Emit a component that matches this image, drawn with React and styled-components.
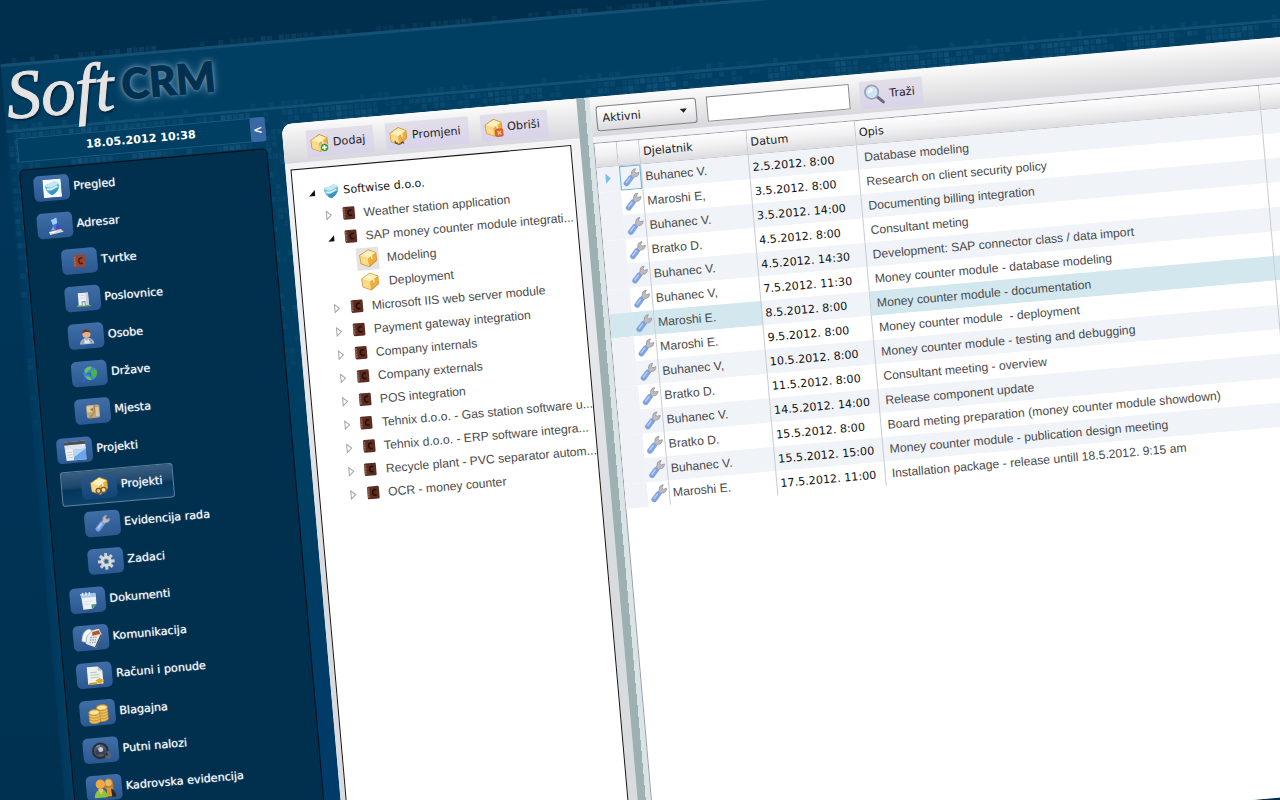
import React from "react";
import styled, { createGlobalStyle, css } from "styled-components";

const GlobalStyle = createGlobalStyle`
    * {
        box-sizing: border-box;
    }

    body {
        margin: 0;
        background: #002f4c;
        font-family: "DejaVu Sans", Verdana, sans-serif;
        font-size: 11px;
    }

    button, input, select {
        font: inherit;
        color: inherit;
    }
`

const Stage = styled.div`
    height: 100vh;
    overflow: hidden;
    background: linear-gradient(175deg, #002f4d 0%, #002f4d 8%, #00365a 20%, #00304e 100%);
`

/* the whole desktop is tilted on the page */
const Scene = styled.div`
    display: flex;
    flex-direction: column;
    width: 100vw;
    min-height: 112vh;
    margin-left: -5px;
    padding-bottom: 5px;
    transform-origin: 5px 0;
    transform: rotate(-5deg) scale(1.017);
`

const TopBand = styled.div`
    display: flex;
    align-items: flex-end;
    height: 63px;
    margin-left: -20px;
    background: #002f4d;
`

const Header = styled.header`
    position: relative;
    display: flex;
    align-items: flex-start;
    gap: 8px;
    height: 68px;
    padding-left: 3px;
    background: #003e62;
    border-top: 3px solid #144f74;
    border-bottom: 3px solid #144f74;
`

const Soft = styled.span`
    position: relative;
    font-family: "Liberation Serif", serif;
    font-style: italic;
    font-size: 68px;
    line-height: 56px;
    color: #e6e3e3;
    -webkit-text-stroke: 1px #e6e3e3;
    text-shadow: 1px 2px 2px #001c30;
`

const Crm = styled.span`
    position: relative;
    font-family: Lato, sans-serif;
    font-weight: 900;
    font-size: 41px;
    line-height: 54px;
    color: #00304f;
    -webkit-text-stroke: 1px #00304f;
    text-shadow: 0 0 3px #86a6ba, 0 0 6px #6b93ad, 0 0 10px #3f7496;
`

const Dots = styled.svg`
    display: block;
    flex: none;
`

const HeaderDots = styled(Dots)`
    position: absolute;
    left: 0;
    bottom: 0;
`

const Backdrop = styled(Dots)`
    position: absolute;
    left: 0;
    top: 0;
`

const Main = styled.div`
    position: relative;
    display: flex;
    flex: 1;
    align-items: stretch;
    gap: 16px;
    padding-left: 9px;
    background:
        linear-gradient(to right, #00385c, #003e62 9px, transparent 9px),
        linear-gradient(#003e62 0%, #003e62 50%, #003a6c 100%);
`

const Aside = styled.aside`
    position: relative;
    display: flex;
    flex-direction: column;
    flex: none;
    gap: 7px;
    width: 245px;
    padding-top: 6px;
`

const Clock = styled.div`
    display: flex;
    align-items: stretch;
    height: 24px;
    background: #003e62;
    border: 1px solid #1c5a82;
    color: #fff;
`

const Stamp = styled.time`
    flex: 1;
    padding-left: 12px;
    line-height: 22px;
    font-weight: bold;
    text-align: center;
`

const Collapse = styled.button`
    width: 15px;
    margin: -1px;
    padding: 0;
    border: 0;
    border-radius: 3px;
    background: #3a68a4;
    font-weight: bold;
`

const Nav = styled.nav`
    display: flex;
    flex-direction: column;
    flex: 1;
    padding: 1px 0 0 12px;
    background: #00304d;
    border: 1px solid #000f1c;
    border-radius: 5px 5px 0 0;
`

const NavRow = styled.div`
    display: flex;
    align-items: center;
    height: 37px;
    padding-left: ${props => (props.$child && !props.$active ? 21 : 0)}px;
`

const NavLink = styled.a`
    display: flex;
    align-items: center;
    gap: 4px;
    color: #f4f7fa;
    text-decoration: none;
    text-shadow: 0 0 1px #c8d4e0;
    white-space: nowrap;

    ${props => props.$active && css`
        height: 34px;
        margin-left: 1px;
        padding: 0 10px 0 19px;
        border: 1px solid #5d819f;
        border-radius: 3px;
        background: linear-gradient(#3a5f80 0%, #1c466a 46%, #04365a 54%, #0b4068 100%);
    `}
`

const NavText = styled.span`
    padding-bottom: 1px;
`

const Tile = styled.span`
    display: flex;
    align-items: center;
    justify-content: center;
    width: 35px;
    height: 25px;
    border-radius: 5px;
    background: ${props => (props.$active
        ? 'linear-gradient(#2c5784, #114578)'
        : 'linear-gradient(#3f6ea8, #2b5890)')};
`

const Workspace = styled.main`
    position: relative;
    display: flex;
    flex: 1;
    min-width: 0;
    margin-top: 15px;
    border-radius: 10px 0 0 0;
    background: #f3f3f7;
    overflow: hidden;
`

const TreePane = styled.section`
    display: flex;
    flex-direction: column;
    flex: none;
    width: 291px;
    background: linear-gradient(#f6f6f9, #d9dcdf 60%);
`

const ListPane = styled.section`
    display: flex;
    flex-direction: column;
    flex: 1;
    min-width: 0;
`

const Splitter = styled.div`
    flex: none;
    width: 13px;
    background: linear-gradient(to right, #9db0b2 0 8px, #d9e4e7 8px 100%);
`

const Toolbar = styled.div`
    display: flex;
    align-items: center;
    gap: ${props => props.$gap}px;
    height: 39px;
    margin-bottom: 6px;
    padding: 5px 0 2px ${props => props.$start}px;
    background: linear-gradient(#fbfbfb, #eaeaeb 45%, #d8d7dc);
`

const ToolButton = styled.button`
    display: flex;
    align-items: center;
    gap: 4px;
    height: 27px;
    padding: 0 8px 0 3px;
    border: 0;
    background: linear-gradient(#e2dfe9, #d9d3ea);
    color: #1c1c24;
`

const TreeBox = styled.ul`
    flex: 1;
    margin: 0 9px 0 5px;
    padding: 12px 0 0;
    border: 1px solid #1e1412;
    background: #fff;
    list-style: none;
`

const TreeRow = styled.li`
    display: flex;
    align-items: center;
    height: 23px;
    padding-left: ${props => 13 + props.$level * 15}px;
    font-family: ${props => (props.$level ? '"Liberation Sans", Arial' : '"DejaVu Sans", Verdana')}, sans-serif;
    font-size: ${props => (props.$level ? 12 : 11)}px;
    color: ${props => (props.$level ? '#4a4a4a' : '#111')};
    white-space: nowrap;
`

const Toggle = styled.button`
    display: flex;
    align-items: center;
    justify-content: center;
    width: 10px;
    height: 16px;
    padding: 0;
    border: 0;
    background: none;
`

const Blank = styled.span`
    width: 10px;
`

const TreeIcon = styled.span`
    display: flex;
    align-items: center;
    justify-content: center;
    width: 22px;
    height: 22px;
    margin: 0 ${props => [1, 4, 8][props.$level]}px 0 3px;
    background: ${props => (props.$marked ? '#e4e3e4' : 'none')};
`

const SelectWrap = styled.div`
    position: relative;
    display: flex;
`

const Select = styled.select`
    width: 99px;
    height: 25px;
    padding: 0 5px;
    appearance: none;
    border: 1px solid #7c8086;
    border-radius: 3px;
    background: linear-gradient(#fff, #f1f1f2 50%, #dadade);
    color: #1c1c1c;
`

const Caret = styled.svg`
    position: absolute;
    right: 9px;
    top: 9px;
    pointer-events: none;
`

const Search = styled.input`
    width: 141px;
    height: 25px;
    padding: 0 5px;
    border: 1px solid #85888d;
    background: #fff;
`

const GridBox = styled.div`
    flex: 1;
    border: 1px solid #9a9ea4;
    border-right: 0;
    border-bottom: 0;
    background: #fff;
`

const Table = styled.table`
    width: 100%;
    table-layout: fixed;
    border-collapse: separate;
    border-spacing: 0;
`

const Th = styled.th`
    height: 24px;
    padding: 0 3px;
    border-right: 1px solid #c2c4ca;
    border-bottom: 1px solid #c6c8ce;
    background: linear-gradient(#fdfdfd, #f1f1f3 50%, #dcdce0);
    color: #1c1c1c;
    font-weight: normal;
    text-align: left;
`

const Tr = styled.tr`
    background: ${props => (props.$striped ? '#f0f3f8' : '#fff')};
`

const Td = styled.td`
    height: 24px;
    padding: 0 ${props => props.$pad || 3}px 1px;
    border-right: 1px solid ${props => (props.$bare ? 'transparent' : '#c9ccd2')};
    background-color: ${props => (props.$picked ? '#d2e7ee' : 'transparent')};
    font-family: "Liberation Sans", Arial, sans-serif;
    font-size: 12px;
    color: #4a4a4a;
    white-space: pre;
`

const Gutter = styled(Td)`
    padding: 0;
    background-color: ${props => (props.$picked ? '#d2e7ee' : '#f0f2f8')};
    text-align: center;
`

const IconCell = styled(Td)`
    padding: 0;
`

const IconFrame = styled.span`
    display: flex;
    align-items: center;
    justify-content: center;
    width: 21px;
    height: 24px;
    border: 1px solid ${props => (props.$focus ? '#6db5cf' : 'transparent')};
`

const DateCell = styled(Td)`
    padding-bottom: 0;
    font-family: "DejaVu Sans", Verdana, sans-serif;
    font-size: 11px;
    color: #111;
`

/* ---- icons ---- */

const Icon = ({ size = 18, children }) => (
    <svg width={size} height={size} viewBox="0 0 18 18" aria-hidden="true">{children}</svg>
)

const Cube = () => (
    <g strokeLinejoin="round">
        <path d="M9.6 1.4 16.2 4.6 16.4 11.4 9.4 16.6 2.2 13.4 1.6 6Z" fill="#f0b848" stroke="#cf9330" strokeWidth="1.4" />
        <path d="M9.6 1.4 16.2 4.6 8.8 9.2 1.6 6Z" fill="#fdeeb4" />
        <path d="M1.6 6 8.8 9.2 9.4 16.6 2.2 13.4Z" fill="#f9d886" />
        <path d="M8.8 9.2 16.2 4.6 16.4 11.4 9.4 16.6Z" fill="#ebae44" />
        <path d="M5.4 3.8 12.2 7 12.6 10" fill="none" stroke="#fff4cc" strokeWidth="1.2" />
        <path d="M4 9.4l3 1.4v2.6l-3-1.4Z" fill="#fbe29c" />
    </g>
)

const BoxIcon = ({ size }) => <Icon size={size}><Cube /></Icon>

const BoxAddIcon = () => (
    <Icon size={19}>
        <Cube />
        <circle cx="13.5" cy="13.5" r="4" fill="#3f9a35" stroke="#e2f2dc" strokeWidth=".7" />
        <path d="M13.5 11.2v4.6M11.2 13.5h4.6" stroke="#fff" strokeWidth="1.5" />
    </Icon>
)

const BoxEditIcon = () => (
    <Icon size={19}>
        <Cube />
        <path d="M6 15c2 2 5 2 6.5 0M5.5 13l.5 2.5 2-.5M13.5 16.5l-.7-2-2 .8" fill="none" stroke="#6d5220" strokeWidth="1" />
    </Icon>
)

const BoxRemoveIcon = () => (
    <Icon size={19}>
        <Cube />
        <rect x="10.5" y="10.5" width="7" height="7" rx="1.5" fill="#e8642a" stroke="#c84a18" strokeWidth=".6" />
        <path d="M12.4 12.4l3.2 3.2M15.6 12.4l-3.2 3.2" stroke="#ffcdb0" strokeWidth="1.2" />
    </Icon>
)

const BoxLinkIcon = () => (
    <Icon size={19}>
        <Cube />
        <circle cx="8" cy="13.5" r="2.3" fill="#e9c98a" stroke="#6a5326" strokeWidth="1.1" />
        <circle cx="12.8" cy="13" r="2.3" fill="#f4dca8" stroke="#7c6230" strokeWidth="1.1" />
    </Icon>
)

const BookIcon = ({ size, cover = '#5c2c20', ink = '#240c08' }) => (
    <Icon size={size}>
        <rect x="2" y="1.5" width="14" height="15" rx="1.5" fill={cover} />
        <path d="M2 3h3v12H2Z" fill="#a06a54" fillOpacity=".4" />
        <path d="M12.6 6c-2.4-1.2-4.4.4-4.4 3s2.2 4 4.4 2.6" fill="none" stroke={ink} strokeWidth="1.8" />
        <path d="M2.5 4.5h1.5M2.5 7.5h1.5M2.5 10.5h1.5M2.5 13.5h1.5" stroke="#c8a494" strokeWidth=".6" />
    </Icon>
)

const GlobeIcon = ({ framed }) => (
    <Icon>
        {framed && <rect x="0" y="0" width="18" height="18" fill="#f4fbff" />}
        <path d="M2 6C4 3.5 7 5 9 3.5 12 1.5 14 2.5 16 5 17 9 13 14 8.5 15.5 5 15 2 10 2 6Z" fill="#6bbfe4" />
        <path d="M2 6C4 3.5 7 5 9 3.5 12 1.5 14 2.5 16 5 13 5 11 8 8 8 5 8 4 7 2 6Z" fill="#c4e8f7" />
        <path d="M5 11.5C8 12.5 11 9 15.5 9 13.5 12.5 11 15 8.5 15.5 7 15 6 14 5 11.5Z" fill="#3b93c4" />
        <path d="M4 9c3 2 6 .5 10-2" fill="none" stroke="#e6f7ff" strokeWidth="1.4" />
    </Icon>
)

const WrenchIcon = ({ size }) => (
    <Icon size={size}>
        <path d="M8 7.8 9.8 5.6C9.4 2.8 11.4.6 14.2.8L12.6 3.4 14 5.2 17 4.4C17 7.2 14.8 9.2 12.2 8.6L10.4 10.4Z" fill="#bebcc0" stroke="#96949a" strokeWidth=".8" />
        <path d="M1.8 13.2 7.2 7.2c1.4-.8 4.4 1.8 3.4 3.4L5.6 16.4C3.6 18 .2 15.2 1.8 13.2Z" fill="#7fa2e2" stroke="#7694d0" strokeWidth=".5" />
        <path d="M3.6 13.8 8.2 8.8" stroke="#b4ccf6" strokeWidth="1.6" />
    </Icon>
)

const GearIcon = () => (
    <Icon>
        <g stroke="#cfd2d4" strokeWidth="3">
            <path d="M9 .8v16.400M.8 9h16.400M3.2 3.2l11.6 11.6M14.8 3.2 3.2 14.8" />
        </g>
        <circle cx="9" cy="9" r="5.4" fill="#d9dcde" />
        <circle cx="9" cy="9" r="2.3" fill="#3c5f88" stroke="#8b98a5" strokeWidth="1" />
    </Icon>
)

const PenIcon = () => (
    <Icon>
        <path d="M2 14.5 14 12.5 16.5 15.5 3 17.5Z" fill="#d9d6d0" />
        <path d="M4 13.5 8 7l5 6Z" fill="#93a6cc" />
        <path d="M5 3 10.5 .8 14.5 11.5 8 13Z" fill="#3a72e2" />
        <path d="M5 3 10.5 .8 11 6.5 6.5 8Z" fill="#9ed0fa" />
        <path d="M11 5 14.5 11.5 9 13Z" fill="#4a45ae" />
        <path d="M3 15.5 9 14.6" stroke="#fff" strokeWidth="1" />
    </Icon>
)

const BuildingIcon = () => (
    <Icon>
        <path d="M1.5 16.5h15l-3-2.5H4Z" fill="#6aa860" />
        <path d="M4 3h10v12H4Z" fill="#eef1f3" />
        <path d="M11.5 3H14v12h-2.5Z" fill="#c9d0d6" />
        <path d="M5.5 5.5h5M5.5 8h5" stroke="#ccd4da" strokeWidth=".8" />
        <path d="M7 11h4v4.5H7Z" fill="#8a9eae" />
        <path d="M8 12.5h2v3H8Z" fill="#e7ecef" />
    </Icon>
)

const PersonIcon = () => (
    <Icon>
        <path d="M2 16.5c0-4 3-6 7-6s7 2 7 6Z" fill="#9fb6d6" />
        <path d="M6.5 10.5 9 13.5l2.5-3v5.5h-5Z" fill="#dde6f0" />
        <circle cx="9" cy="6.5" r="4" fill="#e5b08a" />
        <path d="M4.8 6c0-5 8.4-5 8.4 0-2-1.8-6-1.8-8.4 0Z" fill="#6a3a26" />
        <path d="M11 12l3 3M4 15l2-2.5" stroke="#c98468" strokeWidth="1.2" />
    </Icon>
)

const WorldIcon = () => (
    <Icon>
        <circle cx="9.5" cy="8.5" r="6.8" fill="#3a8ad6" />
        <path d="M4 5c2-3 5-3.6 7-3.2l-1 3-3 1-1.500 3.2Z" fill="#6cc84a" />
        <path d="M10 6l5.5-1c1.5 4 0 6-2 8l-3-2Z" fill="#4fb43c" />
        <path d="M5 11l4 1 1 3.2c-3 0-5-2-5-4.2Z" fill="#6cc84a" />
        <path d="M6 8.5h3.5v3" fill="none" stroke="#2a66b0" strokeWidth="1.4" />
        <path d="M1 16.5l4-3.5" stroke="#2c66c8" strokeWidth="1.8" />
    </Icon>
)

const MapIcon = () => (
    <Icon>
        <rect x="2.5" y="2.5" width="13" height="13" rx="2" fill="#c4a374" />
        <path d="M3 3.5h6v6H3Z" fill="#e0cba4" />
        <path d="M10.5 3v6l-5 6" fill="none" stroke="#a88658" strokeWidth="1.2" />
        <path d="M11.5 5h3v9h-3Z" fill="#d8c8b0" />
        <path d="M6 7l3-2v4Z" fill="#9c7848" />
    </Icon>
)

const WindowIcon = () => (
    <Icon size={22}>
        <path d="M.5 1.5h17v15H1.5Z" fill="#eef1f5" />
        <path d="M.5 1.5h17v2.6H.5Z" fill="#4a5058" />
        <path d="M1 4.6h16.5v3H1Z" fill="#dfe5ee" />
        <path d="M7.5 8h10v8.5h-10Z" fill="#6ba6ea" />
        <path d="M7.5 8h10l-10 6Z" fill="#b9d6fa" />
        <path d="M2.5 10h4M2.5 12h4M2.5 14h4" stroke="#c4cbd4" strokeWidth=".8" />
    </Icon>
)

const NoteIcon = () => (
    <Icon size={20}>
        <path d="M3 4h13v8.5l-4 4H4Z" fill="#eef1f4" />
        <path d="M2 2.5h14v3.5H3Z" fill="#a4c6ee" />
        <path d="M4.5 1.5v3M7.5 1.5v3M10.5 1.5v3" stroke="#e6eef8" strokeWidth="1.3" />
        <path d="M16 12.5h-4.5v4Z" fill="#3f9a6c" />
        <path d="M5.5 9.5h7M5.5 12h5" stroke="#dbe0e5" strokeWidth=".8" />
    </Icon>
)

const PhoneIcon = () => (
    <Icon size={22}>
        <path d="M6 3.5 15.5 2l2 5-5.5 10-8-4Z" fill="#e9ecef" />
        <path d="M1 11C1.5 5 4 2 8 1.5l2 2C6 5 4.5 8 4.5 12Z" fill="#f6f8fa" stroke="#9aa6b4" strokeWidth=".5" />
        <path d="M10 4l5.5-.8.8 3-6.5.8Z" fill="#b4552c" />
        <path d="M8 8.5h5M7.5 10.5h5M7 12.5h5" stroke="#9aa4ae" strokeWidth="1.2" strokeDasharray="1.2 .8" />
        <path d="M17.5 7 12 17l-1-.6L16.5 6.5Z" fill="#3c4450" />
    </Icon>
)

const InvoiceIcon = () => (
    <Icon size={20}>
        <path d="M2.5 1h9.5l4 4v11.5H2.5Z" fill="#eef2ee" />
        <path d="M12 1v4h4Z" fill="#b9c6cc" />
        <path d="M5 6h6M5 8.3h8M5 10.6h8" stroke="#b9c6be" strokeWidth=".9" />
        <path d="M9 13.5l4-2.2 4 2.2-4 3.5Z" fill="#dfae2e" />
        <path d="M3.5 15h7v1.8h-7Z" fill="#c9942a" />
    </Icon>
)

const Coins = ({ x, y, n }) => (
    <g>
        {Array.from({ length: n }, (_, k) => (
            <ellipse key={k} cx={x} cy={y - k * 2.2} rx="4.6" ry="2.4" fill="#eec060" stroke="#b98428" strokeWidth=".6" />
        ))}
        <ellipse cx={x} cy={y - (n - 1) * 2.2} rx="3.4" ry="1.4" fill="#fbe6a4" />
    </g>
)

const CoinsIcon = () => (
    <Icon size={22}>
        <Coins x={12.4} y={13.6} n={5} />
        <Coins x={6} y={14.8} n={4} />
    </Icon>
)

const WheelIcon = () => (
    <Icon size={20}>
        <circle cx="8" cy="9" r="6.5" fill="#4d5a70" stroke="#2c2c36" strokeWidth="1.8" />
        <path d="M3 9c2-2 8-2 10 0l-1.5 4C9.5 11.5 6.5 11.5 4.5 13Z" fill="#3a4252" />
        <circle cx="8.5" cy="8" r="2.2" fill="#c3cbd8" />
        <path d="M5 5.5l3-1.5" stroke="#8896ac" strokeWidth="1.4" />
        <path d="M14 10l3 5M12 14l4 2.5" stroke="#6a6468" strokeWidth="1.7" />
    </Icon>
)

const PeopleIcon = () => (
    <Icon size={22}>
        <path d="M8.8 9C8.5 3 10 1.5 12.4 1.5S16.5 3 16 10l-3 1Z" fill="#c08030" />
        <circle cx="12.4" cy="5" r="2.6" fill="#eab868" />
        <path d="M9 16.5c0-8 8-9 9 0Z" fill="#2c2a28" />
        <path d="M10.5 9h3.5l.5 7h-4Z" fill="#e09a2c" />
        <circle cx="5.8" cy="5.6" r="3.8" fill="#f0a840" />
        <path d="M.5 16.5c0-9 10.5-9 10.5 0Z" fill="#8cc63e" />
        <path d="M3.6 9.5h4.4L5.8 14Z" fill="#f6c270" />
    </Icon>
)

const MagnifierIcon = () => (
    <Icon size={22}>
        <path d="M11 11l5 5" stroke="#6a6e78" strokeWidth="2.4" strokeLinecap="round" />
        <circle cx="7.3" cy="7.3" r="5.4" fill="#cbe4f8" stroke="#98a2b4" strokeWidth="1.3" />
        <path d="M4 8c0-2.4 1.6-4 4-4 1.2 2-1 4-4 4Z" fill="#f6fbff" />
    </Icon>
)

/* ---- data ---- */

const menu = [
    { text: 'Pregled', icon: <GlobeIcon framed /> },
    { text: 'Adresar', icon: <PenIcon /> },
    { text: 'Tvrtke', icon: <BookIcon size={15} cover="#944634" ink="#4c1a10" />, child: true },
    { text: 'Poslovnice', icon: <BuildingIcon />, child: true },
    { text: 'Osobe', icon: <PersonIcon />, child: true },
    { text: 'Države', icon: <WorldIcon />, child: true },
    { text: 'Mjesta', icon: <MapIcon />, child: true },
    { text: 'Projekti', icon: <WindowIcon /> },
    { text: 'Projekti', icon: <BoxLinkIcon />, child: true, active: true },
    { text: 'Evidencija rada', icon: <WrenchIcon size={17} />, child: true },
    { text: 'Zadaci', icon: <GearIcon />, child: true },
    { text: 'Dokumenti', icon: <NoteIcon /> },
    { text: 'Komunikacija', icon: <PhoneIcon /> },
    { text: 'Računi i ponude', icon: <InvoiceIcon /> },
    { text: 'Blagajna', icon: <CoinsIcon /> },
    { text: 'Putni nalozi', icon: <WheelIcon /> },
    { text: 'Kadrovska evidencija', icon: <PeopleIcon /> },
]

const tree = [
    { level: 0, text: 'Softwise d.o.o.', open: true },
    { level: 1, text: 'Weather station application' },
    { level: 1, text: 'SAP money counter module integrati...', open: true },
    { level: 2, text: 'Modeling', marked: true },
    { level: 2, text: 'Deployment' },
    { level: 1, text: 'Microsoft IIS web server module' },
    { level: 1, text: 'Payment gateway integration' },
    { level: 1, text: 'Company internals' },
    { level: 1, text: 'Company externals' },
    { level: 1, text: 'POS integration' },
    { level: 1, text: 'Tehnix d.o.o. - Gas station software u...' },
    { level: 1, text: 'Tehnix d.o.o. - ERP software integra...' },
    { level: 1, text: 'Recycle plant - PVC separator autom...' },
    { level: 1, text: 'OCR - money counter' },
]

const rows = [
    ['Buhanec V.', '2.5.2012. 8:00', 'Database modeling'],
    ['Maroshi E,', '3.5.2012. 8:00', 'Research on client security policy'],
    ['Buhanec V.', '3.5.2012. 14:00', 'Documenting billing integration'],
    ['Bratko D.', '4.5.2012. 8:00', 'Consultant meting'],
    ['Buhanec V.', '4.5.2012. 14:30', 'Development: SAP connector class / data import'],
    ['Buhanec V,', '7.5.2012. 11:30', 'Money counter module - database modeling'],
    ['Maroshi E.', '8.5.2012. 8:00', 'Money counter module - documentation'],
    ['Maroshi E.', '9.5.2012. 8:00', 'Money counter module  - deployment'],
    ['Buhanec V,', '10.5.2012. 8:00', 'Money counter module - testing and debugging'],
    ['Bratko D.', '11.5.2012. 8:00', 'Consultant meeting - overview'],
    ['Buhanec V.', '14.5.2012. 14:00', 'Release component update'],
    ['Bratko D.', '15.5.2012. 8:00', 'Board meting preparation (money counter module showdown)'],
    ['Buhanec V.', '15.5.2012. 15:00', 'Money counter module - publication design meeting'],
    ['Maroshi E.', '17.5.2012. 11:00', 'Installation package - release untill 18.5.2012. 9:15 am'],
]

const pickedRow = 6

// small repeatable noise, so the mosaic is the same on every render
const noise = (a, b) => {
    const n = Math.sin(a * 12.9898 + b * 78.233) * 43758.5453
    return n - Math.floor(n)
}

const Mosaic = ({ as: Box, cols, lines, density, seed = 1 }) => {
    const squares = []
    for (let c = 0; c < cols; c++) {
        for (let l = 0; l < lines; l++) {
            const block = noise(Math.floor(c / 5) + seed, 3)
            const n = noise(c + seed, l)
            if (n < density(c, l) * (0.5 + block)) {
                squares.push(
                    <rect key={c + '-' + l} x={c * 6 + 1} y={l * 6 + 1} width="5" height="5" fillOpacity={0.1 + n * 0.32} />
                )
            }
        }
    }
    return (
        <Box width={cols * 6} height={lines * 6} fill="#2c6c94" aria-hidden="true">{squares}</Box>
    )
}

const TreeGlyph = ({ item }) => {
    if (item.level === 0) return <GlobeIcon />
    if (item.level === 1) return <BookIcon size={15} />
    return <BoxIcon size={19} />
}

const Arrow = ({ open }) => (
    <svg width="8" height="10" viewBox="0 0 8 10" aria-hidden="true">
        {open
            ? <path d="M7 2v6H1Z" fill="#111" />
            : <path d="M1.5 1 6 5 1.5 9Z" fill="#fff" stroke="#a4a4a4" strokeWidth="1" />}
    </svg>
)

const App = () => {
    return (
        <Stage>
            <GlobalStyle />
            <Scene>
                <TopBand>
                    <Mosaic as={Dots} cols={230} lines={1} density={() => 0.6} seed={7} />
                </TopBand>
                <Header>
                    <Mosaic as={HeaderDots} cols={220} lines={1} density={() => 0.3} seed={3} />
                    <Soft>Soft</Soft>
                    <Crm>CRM</Crm>
                </Header>
                <Main>
                    <Mosaic
                        as={Backdrop}
                        cols={220}
                        lines={50}
                        density={(c, l) => (l < 3 ? 0.8 : c < 46 ? 0.8 - l * 0.016 : 0)}
                    />
                    <Aside>
                        <Clock>
                            <Stamp dateTime="2012-05-18T10:38">18.05.2012 10:38</Stamp>
                            <Collapse aria-label="Sakrij izbornik">&lt;</Collapse>
                        </Clock>
                        <Nav>
                            {menu.map((item, i) => (
                                <NavRow key={i} $child={item.child} $active={item.active}>
                                    <NavLink href="#" $active={item.active}>
                                        <Tile $active={item.active}>{item.icon}</Tile>
                                        <NavText>{item.text}</NavText>
                                    </NavLink>
                                </NavRow>
                            ))}
                        </Nav>
                    </Aside>
                    <Workspace>
                        <TreePane>
                            <Toolbar $start={23} $gap={12}>
                                <ToolButton><BoxAddIcon />Dodaj</ToolButton>
                                <ToolButton><BoxEditIcon />Promjeni</ToolButton>
                                <ToolButton><BoxRemoveIcon />Obriši</ToolButton>
                            </Toolbar>
                            <TreeBox>
                                {tree.map((item) => (
                                    <TreeRow key={item.text} $level={item.level}>
                                        {item.level < 2
                                            ? <Toggle aria-label={item.text}><Arrow open={item.open} /></Toggle>
                                            : <Blank />}
                                        <TreeIcon $level={item.level} $marked={item.marked}><TreeGlyph item={item} /></TreeIcon>
                                        {item.text}
                                    </TreeRow>
                                ))}
                            </TreeBox>
                        </TreePane>
                        <Splitter />
                        <ListPane>
                            <Toolbar $start={5} $gap={10}>
                                <SelectWrap>
                                    <Select aria-label="Status">
                                        <option>Aktivni</option>
                                    </Select>
                                    <Caret width="8" height="6" viewBox="0 0 8 6" aria-hidden="true">
                                        <path d="M.5 1h7L4 5Z" fill="#222" />
                                    </Caret>
                                </SelectWrap>
                                <Search type="text" aria-label="Pojam" />
                                <ToolButton><MagnifierIcon />Traži</ToolButton>
                            </Toolbar>
                            <GridBox>
                                <Table>
                                    <colgroup>
                                        <col width="22" />
                                        <col width="22" />
                                        <col width="106" />
                                        <col width="107" />
                                        <col width="399" />
                                        <col />
                                    </colgroup>
                                    <thead>
                                        <tr>
                                            <Th />
                                            <Th />
                                            <Th>Djelatnik</Th>
                                            <Th>Datum</Th>
                                            <Th>Opis</Th>
                                            <Th />
                                        </tr>
                                    </thead>
                                    <tbody>
                                        {rows.map((row, i) => {
                                            const picked = i === pickedRow
                                            return (
                                                <Tr key={i} $striped={i % 2 === 0}>
                                                    <Gutter $bare $picked={picked}>
                                                        {i === 0 && (
                                                            <svg width="7" height="10" viewBox="0 0 7 10" aria-hidden="true">
                                                                <path d="M1 0 6 5 1 10Z" fill="#74c0e2" />
                                                            </svg>
                                                        )}
                                                    </Gutter>
                                                    <IconCell $picked={picked}>
                                                        <IconFrame $focus={i === 0}><WrenchIcon size={18} /></IconFrame>
                                                    </IconCell>
                                                    <Td $picked={picked}>{row[0]}</Td>
                                                    <DateCell>{row[1]}</DateCell>
                                                    <Td $pad={6} $picked={picked}>{row[2]}</Td>
                                                    <Td $bare $picked={picked} />
                                                </Tr>
                                            )
                                        })}
                                    </tbody>
                                </Table>
                            </GridBox>
                        </ListPane>
                    </Workspace>
                </Main>
            </Scene>
        </Stage>
    )
}

export default App;
